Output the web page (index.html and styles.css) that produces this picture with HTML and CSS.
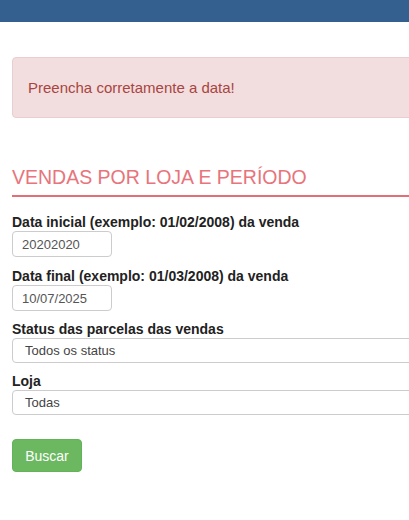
FILE: index.html
```html
<!DOCTYPE html>
<html lang="pt">
<head>
<meta charset="utf-8">
<title>Vendas por loja e período</title>
<link rel="stylesheet" href="styles.css">
</head>
<body>
<div class="topbar"></div>
<div class="container">
  <div class="alert">Preencha corretamente a data!</div>
  <h2 class="title">VENDAS POR LOJA E PERÍODO</h2>
  <form class="form">
    <div class="group group-date">
      <label class="label">Data inicial (exemplo: 01/02/2008) da venda</label>
      <div class="input">20202020</div>
    </div>
    <div class="group">
      <label class="label">Data final (exemplo: 01/03/2008) da venda</label>
      <div class="input">10/07/2025</div>
    </div>
    <div class="group">
      <label class="label">Status das parcelas das vendas</label>
      <div class="select">Todos os status</div>
    </div>
    <div class="group">
      <label class="label">Loja</label>
      <div class="select">Todas</div>
    </div>
    <div class="actions">
      <button type="button" class="btn">Buscar</button>
    </div>
  </form>
</div>
</body>
</html>
```
FILE: styles.css
```css
html, body {
  margin: 0;
  padding: 0;
  overflow: hidden;
  background: #fff;
  font-family: "Liberation Sans", Arial, sans-serif;
  color: #333;
}
.topbar {
  height: 22px;
  background: #34608f;
}
.container {
  width: 700px;
  padding: 35px 12px 0 12px;
}
.alert {
  box-sizing: border-box;
  height: 61px;
  padding: 0 15px;
  display: flex;
  align-items: center;
  background: #f2dede;
  border: 1px solid #ebccd1;
  border-radius: 4px;
  color: #a94442;
  font-size: 15px;
}
.title {
  margin: 47px 0 0 0;
  padding-bottom: 6px;
  border-bottom: 2px solid #e46e75;
  color: #e8747c;
  font-weight: normal;
  font-size: 19.5px;
  line-height: 24px;
}
.form {
  display: flex;
  flex-direction: column;
  margin-top: 17px;
}
.group {
  display: flex;
  flex-direction: column;
  margin-bottom: 10px;
}
.group-date {
  margin-bottom: 11px;
}
.label {
  font-weight: bold;
  font-size: 14px;
  line-height: 17px;
  color: #222;
}
.input, .select {
  box-sizing: border-box;
  height: 26px;
  border: 1px solid #ccc;
  border-radius: 4px;
  font-size: 13px;
  color: #555;
  display: flex;
  align-items: center;
}
.input {
  width: 100px;
  padding-left: 9px;
}
.select {
  width: 100%;
  height: 25px;
  padding-left: 12px;
  color: #444;
}
.actions {
  margin-top: 14px;
}
.btn {
  width: 70px;
  height: 33px;
  border: 1px solid #64b25a;
  border-radius: 4px;
  background: #6bb860;
  color: #fff;
  font-family: "Liberation Sans", Arial, sans-serif;
  font-size: 14px;
  padding: 0;
}
```
